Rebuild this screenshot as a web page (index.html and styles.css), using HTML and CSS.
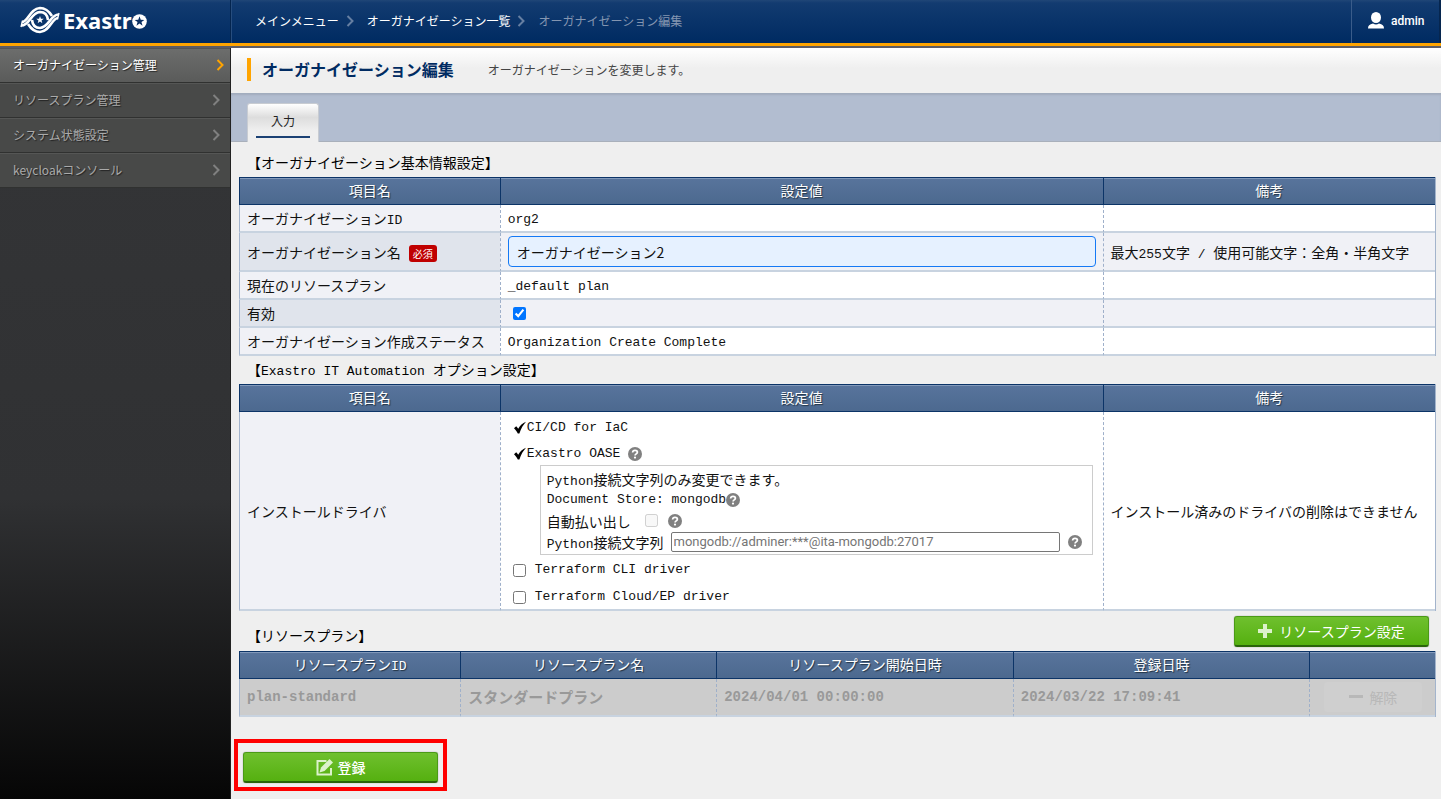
FILE: index.html
```
<!DOCTYPE html>
<html lang="ja">
<head>
<meta charset="utf-8">
<title>オーガナイゼーション編集 - Exastro</title>
<link rel="stylesheet" href="styles.css">
</head>
<body>
<svg class="sprite" aria-hidden="true">
  <symbol id="chevron" viewBox="0 0 8 12"><path d="M1.500 1 6.500 6l-5 5" fill="none" stroke="currentColor" stroke-width="2"/></symbol>
  <symbol id="check" viewBox="0 0 14 14"><path d="M1 7.200 3.200 5.200c.8.7 1.500 1.600 2 2.600C7 4.800 9.500 2 13 .8c-2.700 3-5 6.700-6.600 11.700H4.800C3.800 10.500 2.600 8.600 1 7.200z" fill="currentColor"/></symbol>
  <symbol id="help" viewBox="0 0 14 14"><circle cx="7" cy="7" r="7" fill="#808080"/><path d="M4.600 5.500C4.700 4 5.600 3.300 7 3.300s2.400.8 2.400 2c0 1.500-2.300 1.600-2.300 3.100" fill="none" stroke="#fff" stroke-width="1.700"/><circle cx="7" cy="10.600" r="1.100" fill="#fff"/></symbol>
  <symbol id="star" viewBox="-10 -10 20 20"><path d="M0-10 2.400-3.200 9.500-3.100 3.800 1.200 5.900 8.100 0 4-5.900 8.100-3.800 1.200-9.500-3.100-2.400-3.200z" fill="currentColor"/></symbol>
  <symbol id="band" viewBox="0 0 40 28">
    <path d="M2 16c6 0 8-13.500 18-14 6 0 9.500 4 12 8" fill="none" stroke="#fff" stroke-width="2.600"/>
    <path d="M1.500 19.500C9.500 19.500 11 6.500 20 6c5 0 7.500 3.500 8 8" fill="none" stroke="#fff" stroke-width="2.600"/>
    <path d="M2.500 14.700 1 21" fill="none" stroke="#fff" stroke-width="1.400"/>
  </symbol>
</svg>
<div class="app">
  <header class="topbar">
    <a class="brand" href="#" aria-label="Exastro">
      <svg class="brand-mark" viewBox="0 0 40 28">
        <use href="#band" width="40" height="28"/>
        <g transform="rotate(180 20 14)"><use href="#band" width="40" height="28"/></g>
        <use href="#star" x="16" y="10" width="8" height="8" color="#fff"/>
      </svg>
      <span class="brand-name">Exastr</span>
      <svg class="brand-o" viewBox="0 0 16 16"><circle cx="8" cy="8" r="7.800" fill="#fff"/><use href="#star" x="2.500" y="2.500" width="11" height="11" color="#0b2f62"/></svg>
    </a>
    <nav class="crumbs" aria-label="パンくず">
      <a href="#">メインメニュー</a>
      <svg class="chev"><use href="#chevron"/></svg>
      <a href="#">オーガナイゼーション一覧</a>
      <svg class="chev"><use href="#chevron"/></svg>
      <span class="here">オーガナイゼーション編集</span>
    </nav>
    <button class="user" type="button">
      <svg class="user-icon" viewBox="0 0 18 17"><ellipse cx="9" cy="5.500" rx="5" ry="5.500" fill="#fff"/><path d="M1 16.500c0-3 1.500-4.300 5-5 2 1.300 4 1.300 6 0 3.500.7 5 2 5 5z" fill="#fff"/></svg>
      <span>admin</span>
    </button>
  </header>
  <div class="body">
    <nav class="side" aria-label="メニュー">
      <a class="side-item active" href="#">オーガナイゼーション管理<svg class="chev"><use href="#chevron"/></svg></a>
      <a class="side-item" href="#">リソースプラン管理<svg class="chev"><use href="#chevron"/></svg></a>
      <a class="side-item" href="#">システム状態設定<svg class="chev"><use href="#chevron"/></svg></a>
      <a class="side-item" href="#">keycloakコンソール<svg class="chev"><use href="#chevron"/></svg></a>
    </nav>
    <main class="main">
      <div class="title">
        <h1>オーガナイゼーション編集</h1>
        <p>オーガナイゼーションを変更します。</p>
      </div>
      <div class="tabs" role="tablist"><button class="tab" type="button" role="tab" aria-selected="true"><span>入力</span></button></div>
      <form class="content">
        <h2>【オーガナイゼーション基本情報設定】</h2>
        <table class="grid">
          <colgroup><col class="c-name"><col class="c-value"><col class="c-note"></colgroup>
          <thead><tr><th scope="col">項目名</th><th scope="col">設定値</th><th scope="col">備考</th></tr></thead>
          <tbody>
            <tr><th scope="row">オーガナイゼーション<span class="mono">ID</span></th><td class="mono">org2</td><td></td></tr>
            <tr class="even tall"><th scope="row"><label for="org-name">オーガナイゼーション名</label><span class="required">必須</span></th><td><input class="text-main" id="org-name" type="text" value="オーガナイゼーション2"></td><td>最大<span class="mono">255</span>文字<span class="mono"> / </span>使用可能文字：全角・半角文字</td></tr>
            <tr><th scope="row">現在のリソースプラン</th><td class="mono">_default plan</td><td></td></tr>
            <tr class="even"><th scope="row"><label for="enabled">有効</label></th><td><input class="box" id="enabled" type="checkbox" checked></td><td></td></tr>
            <tr><th scope="row">オーガナイゼーション作成ステータス</th><td class="mono">Organization Create Complete</td><td></td></tr>
          </tbody>
        </table>
        <h2>【<span class="mono">Exastro IT Automation </span>オプション設定】</h2>
        <table class="grid">
          <colgroup><col class="c-name"><col class="c-value"><col class="c-note"></colgroup>
          <thead><tr><th scope="col">項目名</th><th scope="col">設定値</th><th scope="col">備考</th></tr></thead>
          <tbody>
            <tr><th scope="row">インストールドライバ</th>
              <td class="drivers">
                <div class="driver mono"><svg class="tick"><use href="#check"/></svg>CI/CD for IaC</div>
                <div class="driver mono"><svg class="tick"><use href="#check"/></svg>Exastro OASE<svg class="help spaced"><use href="#help"/></svg></div>
                <div class="oase">
                  <div class="line"><span><span class="mono">Python</span>接続文字列のみ変更できます。</span></div>
                  <div class="line"><span class="mono">Document Store: mongodb</span><svg class="help"><use href="#help"/></svg></div>
                  <div class="line"><label for="auto">自動払い出し</label><input class="box auto" id="auto" type="checkbox" disabled><svg class="help"><use href="#help"/></svg></div>
                  <div class="line"><label for="conn"><span class="mono">Python</span>接続文字列</label><input class="conn" id="conn" type="text" placeholder="mongodb://adminer:***@ita-mongodb:27017"><svg class="help"><use href="#help"/></svg></div>
                </div>
                <label class="driver option mono"><input class="box" type="checkbox">Terraform CLI driver</label>
                <label class="driver option mono"><input class="box" type="checkbox">Terraform Cloud/EP driver</label>
              </td>
              <td>インストール済みのドライバの削除はできません</td></tr>
          </tbody>
        </table>
        <div class="plan-head">
          <h2>【リソースプラン】</h2>
          <button class="green" type="button"><svg class="icon-plus" viewBox="0 0 14 14"><path d="M5 0h4v5h5v4H9v5H5V9H0V5h5z" fill="#dcf2cb"/></svg>リソースプラン設定</button>
        </div>
        <table class="grid plans">
          <colgroup><col class="p-id"><col class="p-name"><col class="p-date"><col class="p-date"><col class="p-act"></colgroup>
          <thead><tr><th scope="col">リソースプラン<span class="mono">ID</span></th><th scope="col">リソースプラン名</th><th scope="col">リソースプラン開始日時</th><th scope="col">登録日時</th><th></th></tr></thead>
          <tbody><tr><td class="code">plan-standard</td><td>スタンダードプラン</td><td class="code">2024/04/01 00:00:00</td><td class="code">2024/03/22 17:09:41</td><td><button class="release" type="button" disabled><svg class="icon-minus" viewBox="0 0 14 4"><path d="M0 0h14v3H0z" fill="currentColor"/></svg>解除</button></td></tr></tbody>
        </table>
        <div class="highlight">
          <button class="green strong" type="button"><svg class="icon-edit" viewBox="0 0 17 17"><path d="M10.500 2H1.500v13.500H15V9" fill="none" stroke="#dcf2cb" stroke-width="2"/><path d="M13.500 0 17 3.500 8.500 12 3.500 13.500 5 8.500z" fill="#dcf2cb"/></svg>登録</button>
        </div>
      </form>
    </main>
  </div>
</div>
</body>
</html>
```
FILE: styles.css
```
* { box-sizing: border-box; }
body {
  margin: 0;
  font: 14px/20px "Noto Sans CJK JP", sans-serif;
  color: #111;
  background: #efefef;
}
h1, h2, p { margin: 0; }
a { color: inherit; text-decoration: none; }
button, input { font: inherit; margin: 0; }
.sprite { display: none; }
.mono { font-family: "Liberation Mono", "Noto Sans CJK JP", monospace; font-size: 13px; white-space: pre-wrap; }
span.mono { line-height: 1; }
.chev { width: 8px; height: 12px; flex: none; }

.app { min-height: 100vh; display: flex; flex-direction: column; }
.topbar {
  display: flex;
  height: 48px;
  color: #fff;
  font-size: 12px;
  background: linear-gradient(#204677, #123b70 3px, #002b62 42px);
  border-bottom: 2px solid #5c5c66;
  box-shadow: inset 0 -3px #ffa400;
}
.brand {
  width: 231px;
  height: 43px;
  display: flex;
  align-items: center;
  padding: 0 0 3px 20px;
  border-right: 1px solid #04254f;
}
.brand-mark { width: 40px; height: 28px; }
.brand-name { margin-left: 3px; font: bold 22px/28px "Noto Sans", sans-serif; }
.brand-o { width: 15px; height: 15px; margin-top: 2px; }
.crumbs {
  flex: 1;
  height: 43px;
  display: flex;
  align-items: center;
  padding: 0 0 2px 23px;
  border-left: 1px solid #274d7e;
}
.crumbs .chev { margin: 0 13px 0 7px; color: #667fa2; }
.crumbs .here { color: #8496b1; }
.user {
  height: 43px;
  width: 90px;
  display: flex;
  align-items: center;
  gap: 6px;
  padding: 0 0 2px 15px;
  color: #fff;
  font: 500 12px/20px Roboto, sans-serif;
  background: none;
  border: 0;
  border-left: 1px solid #3a5c8a;
  border-right: 2px solid #06264f;
}
.user-icon { width: 18px; height: 17px; }

.body { flex: 1; display: flex; }
.side {
  flex: none;
  width: 231px;
  color: #aaa;
  font-size: 12px;
  background: linear-gradient(#343537, #303133 60%, #060606);
  border-right: 1px solid #222;
}
.side-item {
  display: flex;
  align-items: center;
  justify-content: space-between;
  height: 35px;
  padding: 0 10px 2px 13px;
  background: #484948;
  border-top: 1px solid #555655;
  border-bottom: 1px solid #303130;
  text-shadow: 1px 1px 1px #222;
}
.side-item .chev { color: #808080; }
.side-item.active { padding-right: 6px; color: #fff; background: linear-gradient(#6c6d6c, #5a5b5a); }
.side-item.active .chev { color: #ffa400; }

.main { flex: 1; min-width: 0; }
.title {
  display: flex;
  align-items: center;
  gap: 34px;
  height: 45px;
  padding: 0 0 2px 16px;
  background: linear-gradient(#fff, #efefef 20px);
}
.title h1 {
  padding-left: 11px;
  border-left: 4px solid #ffa400;
  font-size: 16px;
  line-height: 23px;
  color: #002b62;
}
.title p { font-size: 12px; color: #444; }
.tabs {
  display: flex;
  align-items: flex-end;
  height: 49px;
  padding-left: 16px;
  background: #b2bdd0;
  border-bottom: 1px solid #a9b0bb;
  box-shadow: inset 0 2px 2px #a2acbd;
}
.tab {
  width: 72px;
  height: 39px;
  padding: 7px 8px 4px;
  margin-bottom: -1px;
  color: #222;
  font-size: 12px;
  background: linear-gradient(#fff, #ddd 35%, #efefef 70%);
  border: 1px solid #c8ccd2;
  border-bottom: 0;
  border-radius: 3px 3px 0 0;
}
.tab span { display: block; height: 27px; line-height: 20px; border-bottom: 2px solid #1b4174; }

.content { padding: 7px 5px 8px 8px; }
h2 { height: 28px; padding-left: 8px; font-size: 14px; line-height: 26px; font-weight: normal; color: #000; }
.grid {
  width: 100%;
  table-layout: fixed;
  border-spacing: 0;
  border-right: 1px solid #a3b4cc;
  background: #fff;
}
.c-name { width: 21.8%; }
.c-value { width: 50.4%; }
.c-note { width: 27.8%; }
.grid th, .grid td { font-weight: normal; text-align: left; }
.grid thead th {
  height: 28px;
  padding: 0 8px 2px;
  color: #fff;
  line-height: 20px;
  text-align: center;
  text-shadow: 1px 1px 1px #234;
  background: linear-gradient(#58749c, #4c698f);
  border: solid #0c3467;
  border-width: 1px 0 1px 1px;
  box-shadow: inset 0 1px #8299ba;
}
.grid tbody th, .grid tbody td {
  height: 28px;
  padding: 0 7px;
  border-left: 1px dashed #9fb0ca;
  border-bottom: 2px solid #c8d3e0;
}
.grid tbody td.mono { padding-top: 3px; }
.grid tbody th { background: #f0f1f6; }
.grid tbody th:first-child, .grid tbody td:first-child { border-left: 1px solid #a3b4cc; }
.grid .even td { background: #f0f1f6; }
.grid .even th { background: #e0e4ec; }
.grid .tall th, .grid .tall td { height: 39px; }
.required {
  display: inline-block;
  margin-left: 8px;
  padding: 0 4px;
  color: #fff;
  font-size: 10px;
  line-height: 17px;
  background: #c00000;
  border-radius: 3px;
}
.text-main {
  display: block;
  width: 100%;
  height: 31px;
  padding: 0 8px;
  color: #111;
  background: #e6f1ff;
  border: 1px solid #1579f5;
  border-radius: 4px;
}
.box { width: 13px; height: 13px; flex: none; }
#enabled { display: block; margin-left: 5px; }

.grid tbody .drivers { padding: 1px 10px 0 12px; }
.driver { display: flex; align-items: center; height: 26px; padding-top: 3px; }
.tick { width: 14px; height: 14px; color: #000; }
.help { width: 14px; height: 14px; flex: none; }
.help.spaced { margin-left: 8px; }
.oase { margin-left: 27px; padding: 2px 6px; border: 1px solid #ccc; }
.line { display: flex; align-items: center; height: 21px; }
.auto { margin: 0 10px 0 14px; }
.conn {
  flex: 1;
  min-width: 0;
  height: 20px;
  margin: 0 8px 0 7px;
  padding: 0 2px;
  font: 13px/16px Roboto, sans-serif;
  background: #fff;
  border: 1px solid #767676;
  border-radius: 2px;
}
.conn + .help { margin-right: 4px; }
.conn::placeholder { color: #757575; }
.option { gap: 9px; height: 27px; }

.plan-head { display: flex; justify-content: space-between; align-items: flex-start; height: 40px; padding: 5px 7px 0 0; }
.plan-head h2 { line-height: 38px; }
.green {
  display: flex;
  align-items: center;
  justify-content: center;
  gap: 7px;
  width: 195px;
  height: 31px;
  padding: 0;
  color: #fff;
  background: linear-gradient(#6fc02e, #55b010);
  border: 1px solid #4b9a17;
  border-bottom: 2px solid #2a650b;
  border-radius: 3px;
  box-shadow: 0 0 1px #666;
}
.green.strong { gap: 5px; font-weight: 500; }
.icon-plus { width: 14px; height: 14px; }
.icon-edit { width: 17px; height: 17px; }
.icon-minus { width: 14px; height: 4px; }

.plans .p-id { width: 18.5%; }
.plans .p-name { width: 21.4%; }
.plans .p-date { width: 24.8%; }
.plans .p-act { width: 10.5%; }
.grid.plans tbody td {
  height: 38px;
  color: #999;
  font-size: 15px;
  font-weight: bold;
  background: #ccc;
}
.grid.plans tbody .code { font-family: "Liberation Mono", monospace; font-size: 14px; }
.release {
  display: flex;
  align-items: center;
  justify-content: center;
  gap: 6px;
  width: 98px;
  height: 30px;
  margin-left: 7px;
  color: #b8b8b8;
  font-size: 14px;
  font-weight: normal;
  background: #cfcfcf;
  border: 0;
  border-radius: 4px;
}
.highlight {
  width: fit-content;
  margin: 22px 0 0 -5px;
  padding: 9px 5px 4px;
  border: 4px solid #f00;
}
```
